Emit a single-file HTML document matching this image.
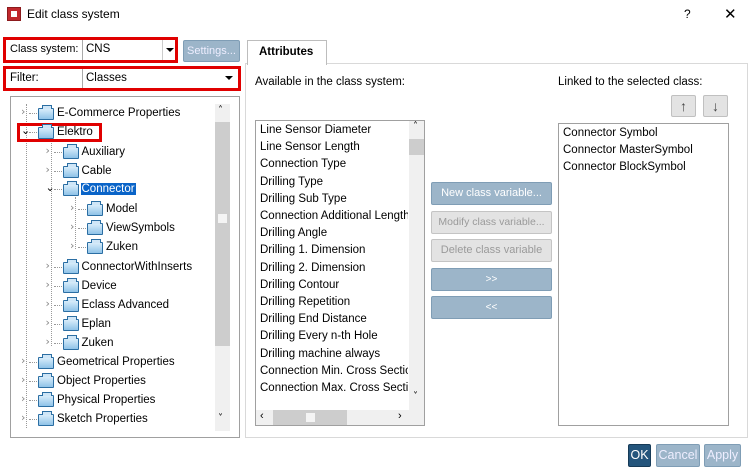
<!DOCTYPE html>
<html><head><meta charset="utf-8"><style>
*{box-sizing:border-box;margin:0;padding:0}
body{width:750px;height:475px;background:#fff;font-family:"Liberation Sans",sans-serif;font-size:11.5px;color:#000;position:relative;overflow:hidden}
.a{position:absolute;white-space:nowrap}
.red{position:absolute;border:3px solid #e00000}
.btn{position:absolute;background:#9cb5c9;border:1px solid #7f9db5;border-radius:2px;color:#fff;text-align:center;font-size:11px;line-height:21px;white-space:nowrap;overflow:hidden}
.dis{background:#e3e3e3;border-color:#c4c4c4;color:#9a9a9a}
.fold{position:absolute;width:16px;height:12px;border:1px solid #2b6ea3;background:linear-gradient(#d8ecfa,#8fc3e8);border-radius:1px}
.fold:before{content:"";position:absolute;left:3px;top:-4px;width:8px;height:3px;border:1px solid #2b6ea3;border-bottom:none;background:#cfe6f7}
.exp{position:absolute;font-size:11px;color:#888;font-family:"DejaVu Sans",sans-serif}
.dot{position:absolute;border-top:1px dotted #999;height:0}
.vdot{position:absolute;border-left:1px dotted #999;width:0}
.li{position:absolute;left:4px;white-space:nowrap}
</style></head><body>
<div class="a" style="left:7px;top:7px;width:14px;height:14px;background:#c0282d;border:1px solid #8c1a1d"><div style="position:absolute;left:3px;top:3px;width:6px;height:6px;background:#fff"></div></div>
<div class="a" style="left:27px;top:7px;font-size:12px">Edit class system</div>
<div class="a" style="left:684px;top:7px;font-size:12px">?</div>
<div class="a" style="left:724px;top:5px;font-size:15px;font-family:'DejaVu Sans',sans-serif">✕</div>

<div class="a" style="left:82px;top:39px;width:94px;height:22px;background:#fff;border-left:1px solid #aaa"></div>
<div class="a" style="left:10px;top:43px;font-size:11px">Class system:</div>
<div class="a" style="left:86px;top:43px">CNS</div>
<div class="a" style="left:162px;top:40px;width:1px;height:20px;background:#ccc"></div>
<div class="a" style="left:166px;top:48px;width:0;height:0;border-left:4px solid transparent;border-right:4px solid transparent;border-top:4px solid #000"></div>
<div class="red" style="left:3px;top:37px;width:175px;height:26px"></div>
<div class="btn" style="left:183px;top:40px;width:57px;height:22px;color:#eef">Settings...</div>

<div class="a" style="left:82px;top:68px;width:1px;height:21px;background:#aaa"></div>
<div class="a" style="left:10px;top:72px">Filter:</div>
<div class="a" style="left:86px;top:72px">Classes</div>
<div class="a" style="left:225px;top:76px;width:0;height:0;border-left:4px solid transparent;border-right:4px solid transparent;border-top:4px solid #000"></div>
<div class="red" style="left:3px;top:66px;width:238px;height:25px"></div>

<div class="a" style="left:10px;top:96px;width:230px;height:342px;border:1px solid #a0a0a0"></div>
<div class="a" style="left:215px;top:104px;width:15px;height:327px;background:#f0f0f0"></div>
<div class="a" style="left:215px;top:122px;width:15px;height:224px;background:#cdcdcd"></div>
<div class="a" style="left:218px;top:214px;width:9px;height:9px;background:#f4f4f4"></div>
<div class="a" style="left:218px;top:105px;font-size:10px;font-family:'DejaVu Sans'">˄</div>
<div class="a" style="left:218px;top:413px;font-size:10px;font-family:'DejaVu Sans'">˅</div>
<div class="vdot" style="left:26px;top:104px;height:324px"></div>
<div class="vdot" style="left:51px;top:140px;height:206px"></div>
<div class="vdot" style="left:75px;top:197px;height:52px"></div>
<div class="red" style="left:17px;top:123px;width:85px;height:19px"></div>
<div id="tree"></div>

<div class="a" style="left:245px;top:63px;width:503px;height:375px;border:1px solid #d9d9d9"></div>
<div class="a" style="left:247px;top:40px;width:80px;height:25px;border:1px solid #bdbdbd;border-bottom:none;background:#fff"></div>
<div class="a" style="left:259px;top:46px;font-weight:bold">Attributes</div>
<div class="a" style="left:255px;top:76px">Available in the class system:</div>
<div class="a" style="left:558px;top:76px">Linked to the selected class:</div>
<div class="a" style="left:671px;top:95px;width:25px;height:22px;background:#e3e3e3;border:1px solid #c0c0c0;border-radius:2px;text-align:center;font-size:14px;line-height:20px;color:#444">↑</div>
<div class="a" style="left:703px;top:95px;width:25px;height:22px;background:#e3e3e3;border:1px solid #c0c0c0;border-radius:2px;text-align:center;font-size:14px;line-height:20px;color:#444">↓</div>

<div class="a" style="left:255px;top:120px;width:170px;height:306px;border:1px solid #a0a0a0;overflow:hidden">
 <div style="position:absolute;left:153px;top:0;width:15px;height:290px;background:#f0f0f0"></div>
 <div style="position:absolute;left:153px;top:18px;width:15px;height:16px;background:#cdcdcd"></div>
 <div style="position:absolute;left:157px;top:0px;font-size:10px;font-family:'DejaVu Sans'">˄</div>
 <div style="position:absolute;left:157px;top:270px;font-size:10px;font-family:'DejaVu Sans'">˅</div>
 <div style="position:absolute;left:0;top:289px;width:168px;height:15px;background:#f0f0f0"></div>
 <div style="position:absolute;left:17px;top:289px;width:74px;height:15px;background:#cdcdcd"></div>
 <div style="position:absolute;left:50px;top:292px;width:9px;height:9px;background:#f4f4f4"></div>
 <div style="position:absolute;left:4px;top:289px;font-size:11px">‹</div>
 <div style="position:absolute;left:142px;top:289px;font-size:11px">›</div>
 <div style="position:absolute;left:0;top:0;width:152px;height:289px;overflow:hidden" id="ll"></div>
</div>

<div class="btn" style="left:431px;top:182px;width:121px;height:23px">New class variable...</div>
<div class="btn dis" style="left:431px;top:211px;width:121px;height:23px;font-size:10.5px">Modify class variable...</div>
<div class="btn dis" style="left:431px;top:239px;width:121px;height:23px">Delete class variable</div>
<div class="btn" style="left:431px;top:268px;width:121px;height:23px;font-size:10px">&gt;&gt;</div>
<div class="btn" style="left:431px;top:296px;width:121px;height:23px;font-size:10px">&lt;&lt;</div>

<div class="a" style="left:558px;top:123px;width:171px;height:303px;border:1px solid #a0a0a0">
 <div class="li" style="top:3px">Connector Symbol</div>
 <div class="li" style="top:20px">Connector MasterSymbol</div>
 <div class="li" style="top:37px">Connector BlockSymbol</div>
</div>

<div class="btn" style="left:628px;top:444px;width:23px;height:23px;background:#24557c;border-color:#163a57;font-size:12.5px">OK</div>
<div class="btn" style="left:656px;top:444px;width:44px;height:23px;color:#eef;font-size:12.5px">Cancel</div>
<div class="btn" style="left:704px;top:444px;width:37px;height:23px;color:#eef;font-size:12.5px">Apply</div>

<script>
var t=[[0,"E-Commerce Properties",113],[0,"Elektro",132,1],[1,"Auxiliary",152],[1,"Cable",171],[1,"Connector",189,1,1],[2,"Model",209],[2,"ViewSymbols",228],[2,"Zuken",247],[1,"ConnectorWithInserts",267],[1,"Device",286],[1,"Eclass Advanced",305],[1,"Eplan",324],[1,"Zuken",343],[0,"Geometrical Properties",362],[0,"Object Properties",381],[0,"Physical Properties",400],[0,"Sketch Properties",419]];
var h="";t.forEach(function(r){var l=r[0],x=22+l*24.5,y=r[2];
h+='<div class="exp" style="left:'+(x-1)+'px;top:'+(y-8)+'px">'+(r[3]?'<span style="color:#000">⌄</span>':'›')+'</div>';
h+='<div class="dot" style="left:'+(x+7)+'px;top:'+y+'px;width:10px"></div>';
h+='<div class="fold" style="left:'+(x+16)+'px;top:'+(y-5)+'px"></div>';
h+='<div class="a" style="left:'+(x+35)+'px;top:'+(y-6)+'px;'+(r[4]?'background:#0a64c8;color:#fff;padding:0 1px;margin-left:-1px;':'')+'">'+r[1]+'</div>';});
document.getElementById("tree").innerHTML=h;
var L=["Line Sensor Diameter","Line Sensor Length","Connection Type","Drilling Type","Drilling Sub Type","Connection Additional Length","Drilling Angle","Drilling 1. Dimension","Drilling 2. Dimension","Drilling Contour","Drilling Repetition","Drilling End Distance","Drilling Every n-th Hole","Drilling machine always","Connection Min. Cross Section","Connection Max. Cross Section"];
var g="";L.forEach(function(s,i){g+='<div class="li" style="top:'+(3+i*17.2)+'px">'+s+'</div>'});
document.getElementById("ll").innerHTML=g;
</script>
</body></html>
